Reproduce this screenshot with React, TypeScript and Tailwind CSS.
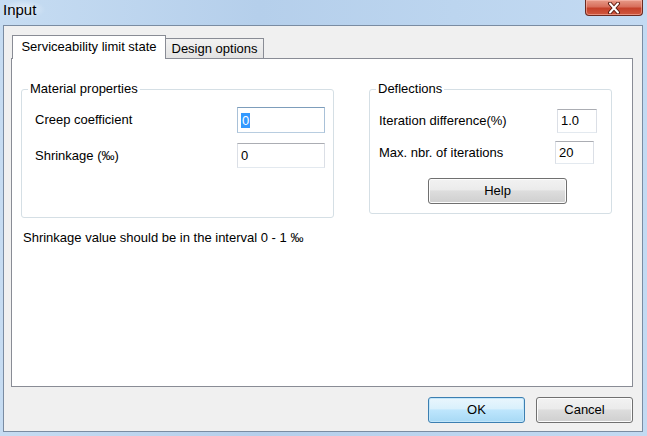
import React from "react";

const font = { fontFamily: '"Liberation Sans", Arial, sans-serif' };

function TextBox({ value, w, h, selected, focused }: { value: string; w: string; h: string; selected?: boolean; focused?: boolean }) {
  return (
    <div
      className={`${w} ${h} flex items-center bg-white border pl-[3px] text-[13px] text-black ${
        focused
          ? "border-t-[#7d9dbb] border-l-[#a9c1d8] border-r-[#a9c1d8] border-b-[#b8cde0]"
          : "border-t-[#abadb3] border-l-[#dbdfe6] border-r-[#dbdfe6] border-b-[#e3e9ef]"
      }`}
    >
      {selected ? <span className="bg-[#3399ff] text-white leading-[15px] px-[1px]">{value}</span> : <span>{value}</span>}
    </div>
  );
}

function Button({ label, w, primary }: { label: string; w: string; primary?: boolean }) {
  return (
    <div
      className={`${w} h-[26px] rounded-[3px] border flex items-center justify-center text-[13px] text-black ${
        primary
          ? "border-[#3c7fb1] bg-[linear-gradient(#e9f6fd_0%,#d9f0fc_45%,#bee6fd_50%,#a7d9f5_100%)] shadow-[inset_0_0_0_1px_#c2e6fa]"
          : "border-[#707070] bg-[linear-gradient(#f2f2f2_0%,#ebebeb_45%,#dddddd_50%,#cfcfcf_100%)] shadow-[inset_0_0_0_1px_#fcfcfc]"
      }`}
    >
      {label}
    </div>
  );
}

export default function App() {
  return (
    <div
      className="w-[647px] h-[436px] flex flex-col bg-[linear-gradient(90deg,#c6dcf2_0%,#b5cfeb_40%,#bcd5ef_70%,#c3daf2_100%)] overflow-hidden"
      style={font}
    >
      {/* title bar */}
      <div className="h-[25px] flex items-start shrink-0">
        <div className="pl-[3px] pt-[1px] text-[15px] leading-[18px] text-black bg-[radial-gradient(ellipse_at_center,rgba(255,255,255,0.55)_0%,rgba(255,255,255,0)_70%)] pr-[10px]">
          Input
        </div>
        <div className="flex-1" />
        <div className="mr-[4px] w-[58px] h-[16px] rounded-b-[4px] border border-t-0 border-[#6a2a20] bg-[linear-gradient(#e79a88_0%,#d86f5c_45%,#c5412a_55%,#d0583f_100%)] flex items-center justify-center shadow-[inset_0_0_0_1px_rgba(255,200,190,0.5)]">
          <svg width="14" height="12" viewBox="0 0 14 12">
            <path d="M3 1.5 L11 10.5 M11 1.5 L3 10.5" stroke="#5a1a10" strokeWidth="4" strokeLinecap="round" />
            <path d="M3 1.5 L11 10.5 M11 1.5 L3 10.5" stroke="#ffffff" strokeWidth="2" strokeLinecap="round" />
          </svg>
        </div>
      </div>

      {/* client area */}
      <div className="ml-[3px] mr-[4px] mb-[4px] flex-1 border border-[#7a8ca2] bg-[#f0f0f0] pt-[9px] pl-[7px] pr-[9px] flex flex-col">
        {/* tabs */}
        <div className="relative z-10 -mb-[1px] flex items-end pl-[1px] h-[24px]">
          <div className="w-[154px] h-[24px] bg-white border border-b-0 border-[#898c95] flex items-center justify-center text-[13px] text-black pb-[1px]">
            Serviceability limit state
          </div>
          <div className="w-[98px] h-[21px] border border-l-0 border-[#898c95] bg-[linear-gradient(#f2f2f2,#e3e3e3)] flex items-center justify-center text-[13px] text-black">
            Design options
          </div>
        </div>

        {/* panel */}
        <div className="h-[329px] border border-[#898c95] bg-white pt-[30px] pl-[9px] flex items-start">
          <div className="flex flex-col">
            <div className="w-[313px] h-[129px] rounded-[3px] border border-[#d5dfe5] flex flex-col">
              <div className="-mt-[9px] ml-[6px] w-fit bg-white px-[2px] text-[13px] leading-[16px] text-black">Material properties</div>
              <div className="mt-[10px] pl-[13px] flex items-center">
                <div className="w-[202px] text-[13px] text-black">Creep coefficient</div>
                <TextBox value="0" w="w-[88px]" h="h-[26px]" selected focused />
              </div>
              <div className="mt-[10px] pl-[13px] flex items-center">
                <div className="w-[202px] text-[13px] text-black">Shrinkage (‰)</div>
                <TextBox value="0" w="w-[88px]" h="h-[25px]" />
              </div>
            </div>
            <div className="mt-[12px] ml-[2px] text-[13px] leading-[16px] text-black">Shrinkage value should be in the interval 0 - 1 ‰</div>
          </div>

          <div className="ml-[35px] w-[243px] h-[125px] rounded-[3px] border border-[#d5dfe5] flex flex-col">
            <div className="-mt-[9px] ml-[6px] w-fit bg-white px-[2px] text-[13px] leading-[16px] text-black">Deflections</div>
            <div className="mt-[12px] pl-[9px] flex items-center">
              <div className="w-[178px] text-[13px] text-black">Iteration difference(%)</div>
              <TextBox value="1.0" w="w-[40px]" h="h-[24px]" />
            </div>
            <div className="mt-[8px] pl-[9px] flex items-center">
              <div className="w-[176px] text-[13px] text-black">Max. nbr. of iterations</div>
              <TextBox value="20" w="w-[39px]" h="h-[23px]" />
            </div>
            <div className="mt-[14px] ml-[58px]">
              <Button label="Help" w="w-[139px]" />
            </div>
          </div>
        </div>

        {/* buttons */}
        <div className="mt-[10px] flex justify-end gap-[11px]">
          <Button label="OK" w="w-[97px]" primary />
          <Button label="Cancel" w="w-[97px]" />
        </div>
      </div>
    </div>
  );
}
